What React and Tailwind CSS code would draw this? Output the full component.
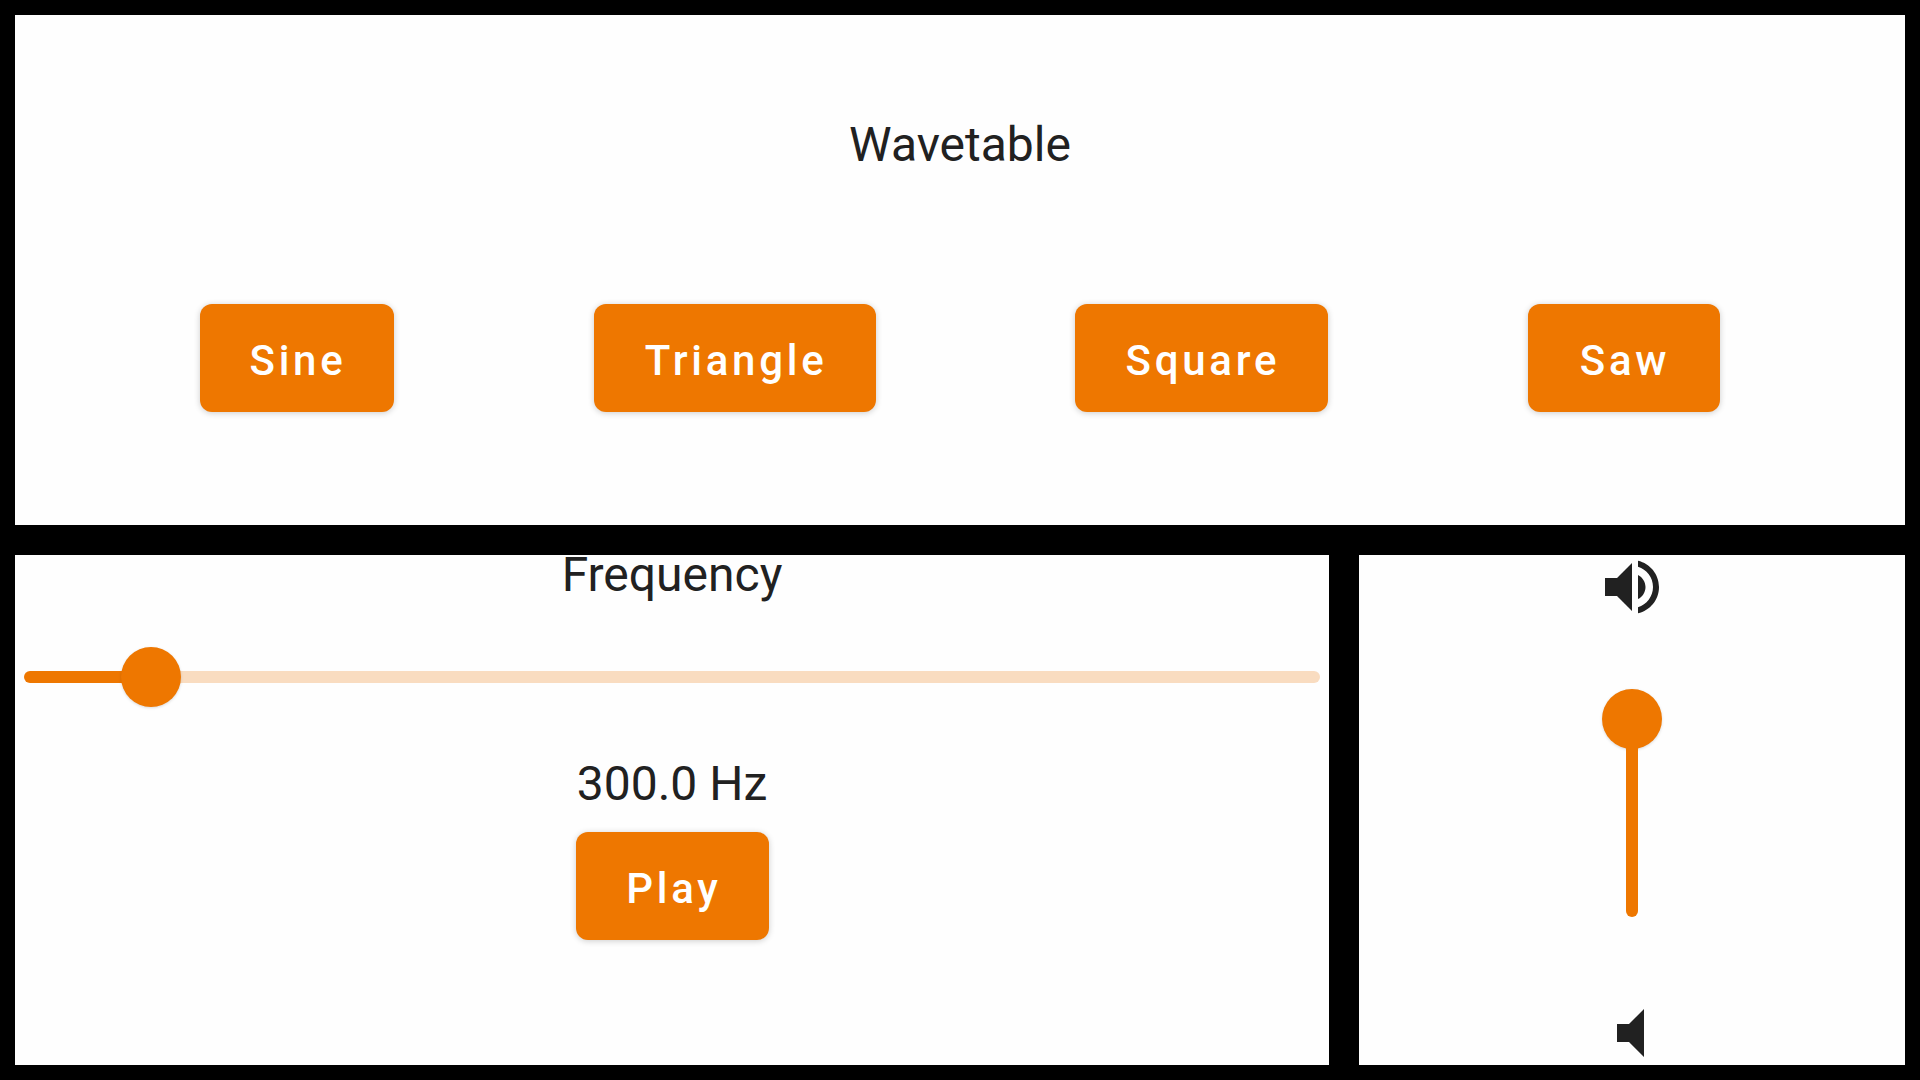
const WAVES = [
  { name: "Sine", width: "w-[194px] pl-[2px]" },
  { name: "Triangle", width: "w-[282px] pl-[3px]" },
  { name: "Square", width: "w-[253px] pl-[2px]" },
  { name: "Saw", width: "w-[192px] pl-[2px]" },
];

function Button({ width, children }) {
  return (
    <button
      className={`${width} h-[108px] shrink-0 rounded-xl bg-[#ee7700] pt-[5px] text-[42px] leading-[48px] font-medium tracking-[3.75px] text-white shadow-[0_1px_6px_rgba(0,0,0,0.2)]`}
    >
      {children}
    </button>
  );
}

function Label({ children }) {
  return <p className="text-center text-[48px] leading-[40px]">{children}</p>;
}

function FrequencySlider() {
  return (
    <div className="flex h-[60px] w-full items-center px-[9px]">
      <div className="-mr-[30px] h-3 w-[127px] rounded-l-full bg-[#ee7700]" />
      <div className="z-10 size-[60px] shrink-0 rounded-full bg-[#ee7700] shadow-[0_1px_3px_rgba(0,0,0,0.15)]" />
      <div className="-ml-[30px] h-3 flex-1 rounded-r-full bg-[#f9dcc0]" />
    </div>
  );
}

function VolumeSlider() {
  return (
    <div className="flex flex-col items-center">
      <div className="size-[60px] rounded-full bg-[#ee7700] shadow-[0_1px_3px_rgba(0,0,0,0.15)]" />
      <div className="z-10 -mt-[30px] h-[198px] w-3 rounded-b-full bg-[#ee7700]" />
    </div>
  );
}

function Icon({ d }) {
  return (
    <svg viewBox="0 0 24 24" className="size-[72px] shrink-0 fill-[#212121]">
      <path d={d} />
    </svg>
  );
}

export default function App() {
  return (
    <main className="flex h-[1080px] w-[1920px] flex-col gap-[30px] overflow-hidden bg-black p-[15px] font-['Roboto',sans-serif] text-[#212121]">
      <section className="flex h-[510px] flex-col bg-[#fefefe] pt-[110px]">
        <Label>Wavetable</Label>
        <div className="mt-[139px] flex justify-between px-[185px]">
          {WAVES.map((wave) => (
            <Button key={wave.name} width={wave.width}>
              {wave.name}
            </Button>
          ))}
        </div>
      </section>
      <div className="flex h-[510px] gap-[30px]">
        <section className="flex w-[1314px] flex-col items-center bg-[#fefefe]">
          <Label>Frequency</Label>
          <div className="mt-[52px] w-full">
            <FrequencySlider />
          </div>
          <div className="mt-[57px] mb-[28px]">
            <Label>300.0 Hz</Label>
          </div>
          <Button width="w-[193px] pl-[4px]">Play</Button>
        </section>
        <section className="flex flex-1 flex-col items-center justify-center overflow-hidden bg-[#fefefe]">
          <Icon d="M3 9v6h4l5 5V4L7 9H3zm13.5 3c0-1.77-1.02-3.29-2.5-4.03v8.05c1.48-.73 2.5-2.25 2.5-4.02zM14 3.23v2.06c2.89.86 5 3.54 5 6.71s-2.11 5.85-5 6.71v2.06c4.01-.91 7-4.49 7-8.77s-2.99-7.86-7-8.77z" />
          <div className="mt-[66px] mb-[80px]">
            <VolumeSlider />
          </div>
          <Icon d="M7 9v6h4l5 5V4l-5 5H7z" />
        </section>
      </div>
    </main>
  );
}
